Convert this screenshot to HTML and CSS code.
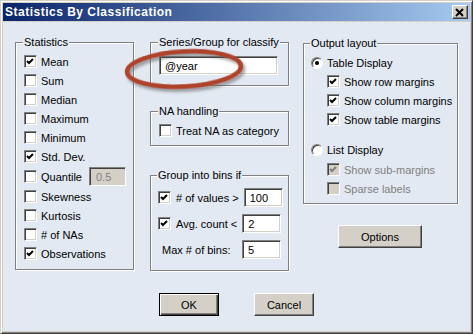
FILE: index.html
```html
<!DOCTYPE html>
<html lang="en">
<head>
    <meta charset="UTF-8">
    <title>Statistics By Classification</title>
    <link rel="stylesheet" href="styles.css">
</head>
<body>

    <div class="window">
        <!-- Title Bar -->
        <div class="titlebar">
            <span class="title">Statistics By Classification</span>
            <button class="close">
                <svg width="10" height="9" viewBox="0 0 10 9"><path d="M1 1 L8 8 M8 1 L1 8" stroke="#000" stroke-width="2"/></svg>
            </button>
        </div>

        <div class="client">
            <div class="panes">

                <!-- Statistics column -->
                <div class="col col-stats">
                    <fieldset class="group stats">
                        <legend>Statistics</legend>
                        <div class="row"><span class="cb"><svg width="11" height="11"><polyline points="2,5 4,7 8,3" fill="none" stroke="#000" stroke-width="2"/></svg></span>Mean</div>
                        <div class="row"><span class="cb"></span>Sum</div>
                        <div class="row"><span class="cb"></span>Median</div>
                        <div class="row"><span class="cb"></span>Maximum</div>
                        <div class="row"><span class="cb"></span>Minimum</div>
                        <div class="row"><span class="cb"><svg width="11" height="11"><polyline points="2,5 4,7 8,3" fill="none" stroke="#000" stroke-width="2"/></svg></span>Std. Dev.</div>
                        <div class="row tall"><span class="cb"></span>Quantile<input class="field quantile" type="text" value="0.5" disabled></div>
                        <div class="row"><span class="cb"></span>Skewness</div>
                        <div class="row"><span class="cb"></span>Kurtosis</div>
                        <div class="row"><span class="cb"></span># of NAs</div>
                        <div class="row"><span class="cb"><svg width="11" height="11"><polyline points="2,5 4,7 8,3" fill="none" stroke="#000" stroke-width="2"/></svg></span>Observations</div>
                    </fieldset>
                </div>

                <!-- Classification column -->
                <div class="col col-class">
                    <fieldset class="group series">
                        <legend>Series/Group for classify</legend>
                        <input class="field series-input" type="text" value="@year">
                    </fieldset>

                    <fieldset class="group na">
                        <legend>NA handling</legend>
                        <div class="row"><span class="cb"></span>Treat NA as category</div>
                    </fieldset>

                    <fieldset class="group bins">
                        <legend>Group into bins if</legend>
                        <div class="row"><span class="cb"><svg width="11" height="11"><polyline points="2,5 4,7 8,3" fill="none" stroke="#000" stroke-width="2"/></svg></span># of values &gt;<input class="field num" type="text" value="100"></div>
                        <div class="row"><span class="cb"><svg width="11" height="11"><polyline points="2,5 4,7 8,3" fill="none" stroke="#000" stroke-width="2"/></svg></span>Avg. count &lt;<input class="field num" type="text" value="2"></div>
                        <div class="row indent">Max # of bins:<input class="field num" type="text" value="5"></div>
                    </fieldset>
                </div>

                <!-- Output layout column -->
                <div class="col col-layout">
                    <fieldset class="group layout">
                        <legend>Output layout</legend>
                        <div class="row"><span class="radio on"></span>Table Display</div>
                        <div class="row sub"><span class="cb"><svg width="11" height="11"><polyline points="2,5 4,7 8,3" fill="none" stroke="#000" stroke-width="2"/></svg></span>Show row margins</div>
                        <div class="row sub"><span class="cb"><svg width="11" height="11"><polyline points="2,5 4,7 8,3" fill="none" stroke="#000" stroke-width="2"/></svg></span>Show column margins</div>
                        <div class="row sub"><span class="cb"><svg width="11" height="11"><polyline points="2,5 4,7 8,3" fill="none" stroke="#000" stroke-width="2"/></svg></span>Show table margins</div>
                        <div class="row list"><span class="radio"></span>List Display</div>
                        <div class="row sub disabled first-off"><span class="cb off"><svg width="11" height="11"><polyline points="2,5 4,7 8,3" fill="none" stroke="#808080" stroke-width="2"/></svg></span>Show sub-margins</div>
                        <div class="row sub disabled"><span class="cb off"></span>Sparse labels</div>
                    </fieldset>
                    <button class="btn options">Options</button>
                </div>
            </div>

            <!-- Dialog buttons -->
            <div class="actions">
                <button class="btn default">OK</button>
                <button class="btn">Cancel</button>
            </div>
        </div>

        <!-- Hand-drawn highlight -->
        <svg class="highlight" width="134" height="54" viewBox="0 0 134 54">
            <defs>
                <filter id="shade" x="-10%" y="-20%" width="130%" height="160%">
                    <feDropShadow dx="2" dy="3" stdDeviation="1.5" flood-color="#555" flood-opacity="0.55"/>
                </filter>
            </defs>
            <ellipse cx="66" cy="25" rx="57" ry="17.5" transform="rotate(-3 66 25)" fill="none" stroke="#ae432b" stroke-width="4.5" filter="url(#shade)"/>
        </svg>
    </div>

</body>
</html>
```

FILE: styles.css
```css
/* Reset & Global Styles */
* {
    margin: 0;
    padding: 0;
    box-sizing: border-box;
    font-family: "Liberation Sans", Arial, sans-serif;
    font-size: 11px;
}

body {
    width: 473px;
    height: 334px;
    overflow: hidden;
    background: #d4d0c8;
    color: #000;
}

/* Window Frame */
.window {
    position: relative;
    width: 473px;
    height: 334px;
    background: #d4d0c8;
    border: 1px solid;
    border-color: #d4d0c8 #404040 #404040 #d4d0c8;
    box-shadow: inset 1px 1px #fff, inset -1px -1px #808080;
    padding: 2px;
    display: flex;
    flex-direction: column;
}

/* Title Bar */
.titlebar {
    height: 18px;
    display: flex;
    align-items: center;
    justify-content: space-between;
    padding-left: 2px;
    background: linear-gradient(to right, #0a246a, #a6caf0);
}

.title {
    color: #fff;
    font-weight: bold;
    font-size: 12px;
    letter-spacing: 0.5px;
}

.close {
    width: 16px;
    height: 14px;
    margin-right: 2px;
    display: flex;
    align-items: center;
    justify-content: center;
    background: #d4d0c8;
    border: 1px solid;
    border-color: #fff #404040 #404040 #fff;
    box-shadow: inset -1px -1px #808080;
}

/* Client Area */
.client {
    flex: 1;
    margin-top: 1px;
    background: #e3e9f2;
    padding: 14px 0 0 12px;
}

.panes {
    display: flex;
    align-items: flex-start;
}

.col {
    display: flex;
    flex-direction: column;
}

.col-stats {
    width: 119px;
}

.col-class {
    width: 139px;
    margin-left: 16px;
}

.col-layout {
    width: 155px;
    margin-left: 14px;
    margin-top: 1px;
}

/* Group Boxes */
.group {
    min-inline-size: 0;
    border: 1px solid #808080;
    box-shadow: inset 1px 1px #fff, 1px 1px #fff;
    padding: 0 8px;
}

.group legend {
    line-height: 13px;
    padding: 0 1px;
    margin-left: -1px;
    background: #e3e9f2;
}

.stats {
    height: 234px;
    padding-top: 3px;
}

.series {
    height: 50px;
    padding-top: 7px;
}

.na {
    height: 41px;
    margin-top: 19px;
    padding-top: 3px;
}

.bins {
    height: 102px;
    margin-top: 23px;
    padding: 6px 7px 0;
    display: flex;
    flex-direction: column;
    gap: 7px;
}

.layout {
    height: 167px;
    padding: 3px 7px 0;
}

/* Rows */
.row {
    display: flex;
    align-items: center;
    height: 19px;
    gap: 4px;
    white-space: nowrap;
}

.row.tall {
    height: 21px;
}

.bins .row {
    gap: 5px;
}

.row.indent {
    padding-left: 4px;
}

.row.sub {
    padding-left: 16px;
}

.row.list {
    margin-top: 11px;
}

.row.first-off {
    margin-top: 1px;
}

.row.disabled {
    color: #808080;
}

/* Checkboxes & Radios */
.cb {
    flex: none;
    width: 13px;
    height: 13px;
    background: #fff;
    border: 1px solid;
    border-color: #808080 #fff #fff #808080;
    box-shadow: inset 1px 1px #404040, inset -1px -1px #d4d0c8;
    display: flex;
}

.cb.off {
    background: #d4d0c8;
}

.radio {
    flex: none;
    width: 12px;
    height: 12px;
    border-radius: 50%;
    background: #fff;
    border: 1px solid;
    border-color: #808080 #fff #fff #808080;
    box-shadow: inset 1px 1px #404040;
    display: flex;
    align-items: center;
    justify-content: center;
}

.radio.on::after {
    content: "";
    width: 4px;
    height: 4px;
    border-radius: 50%;
    background: #000;
}

/* Text Fields */
.field {
    height: 19px;
    background: #fff;
    border: 1px solid;
    border-color: #808080 #fff #fff #808080;
    box-shadow: inset 1px 1px #404040, inset -1px -1px #d4d0c8;
    padding: 0 4px;
    color: #000;
    outline: none;
}

.series-input {
    width: 119px;
    padding-left: 5px;
}

.quantile {
    width: 37px;
    margin-left: 3px;
    background: #d4d0c8;
    color: #808080;
    padding-left: 6px;
}

.num {
    width: 39px;
    margin-left: auto;
    padding-left: 5px;
}

/* Buttons */
.btn {
    height: 23px;
    width: 60px;
    background: #d4d0c8;
    color: #000;
    border: 1px solid;
    border-color: #fff #404040 #404040 #fff;
    box-shadow: inset -1px -1px #808080, inset 1px 1px #d4d0c8;
}

.btn.default {
    border-color: #000;
    box-shadow: inset 1px 1px #fff, inset -1px -1px #404040, inset -2px -2px #808080;
}

.options {
    width: 84px;
    margin: 21px 0 0 35px;
}

.actions {
    display: flex;
    gap: 35px;
    padding-left: 144px;
    margin-top: 22px;
}

/* Highlight Overlay */
.highlight {
    position: absolute;
    left: 117px;
    top: 43px;
    pointer-events: none;
}
```
